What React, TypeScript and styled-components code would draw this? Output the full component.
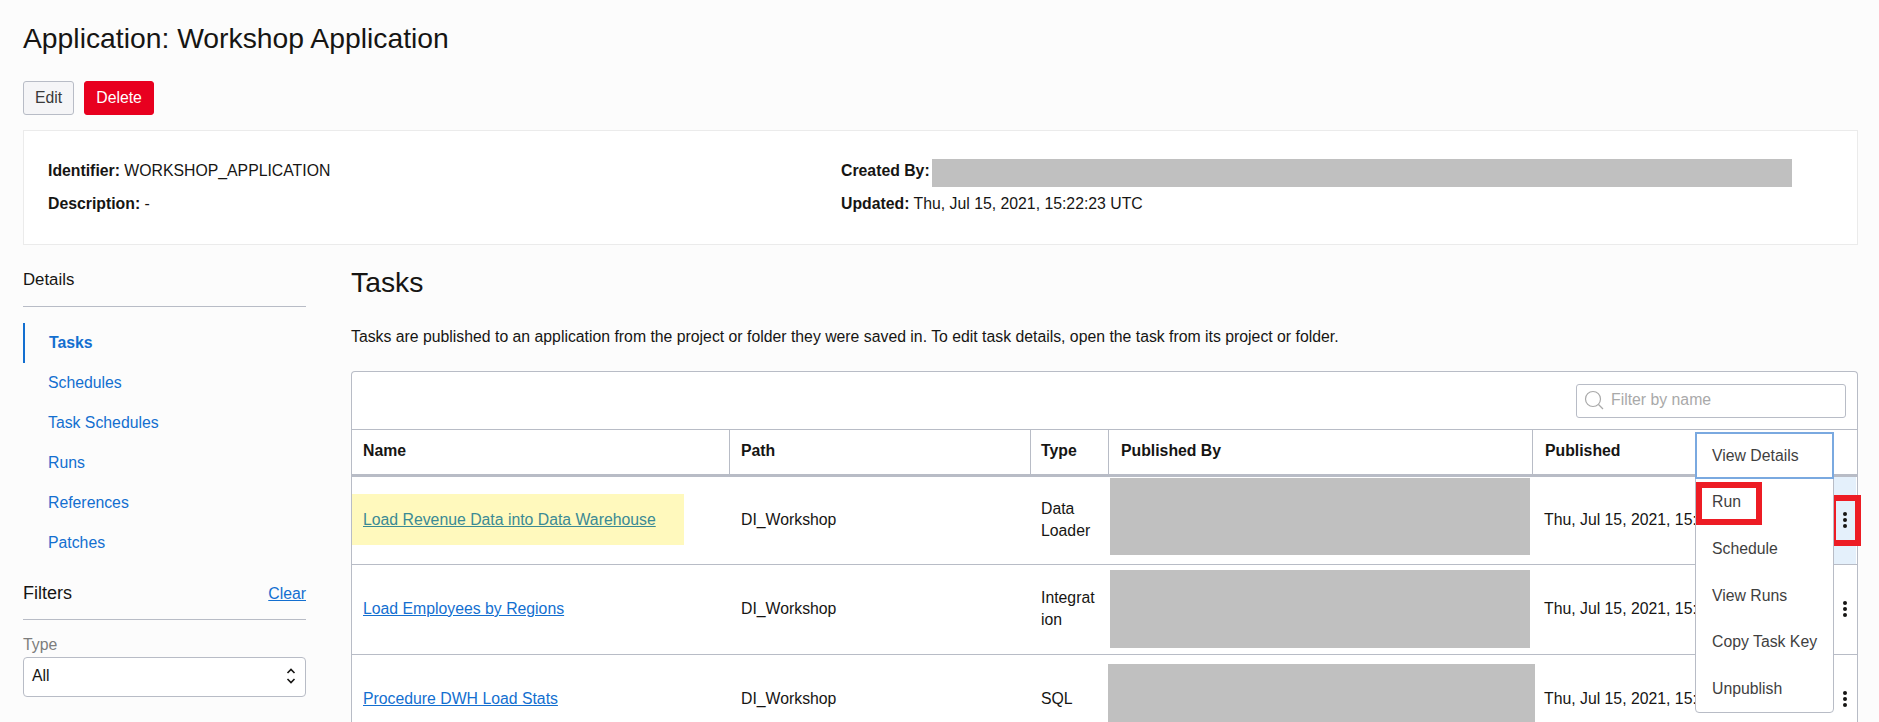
import styled, { createGlobalStyle } from 'styled-components';

const GlobalStyle = createGlobalStyle`
  html, body {
    margin: 0;
    padding: 0;
    background: #fcfcfc;
  }
  body {
    font-family: "Liberation Sans", Arial, sans-serif;
    font-size: 15.8px;
    color: #161513;
  }
  *, *::after {
    box-sizing: border-box;
  }
`;

const Page = styled.div`
  width: 1879px;
  height: 722px;
  padding: 22px 21px 0 23px;
  overflow: hidden;
`;

const Title = styled.h1`
  margin: 0;
  font-size: 28.3px;
  font-weight: 400;
  line-height: 32px;
`;

const ButtonRow = styled.div`
  display: flex;
  gap: 10px;
  margin-top: 27px;
`;

const Button = styled.button<{ $danger?: boolean }>`
  height: 34px;
  padding: 0 11px;
  border-radius: 3px;
  border: 1px solid ${(p) => (p.$danger ? '#e8001f' : '#b8bcc6')};
  background: ${(p) => (p.$danger ? '#e8001f' : '#f5f5f7')};
  color: ${(p) => (p.$danger ? '#ffffff' : '#3a3a3a')};
  font: inherit;
`;

const InfoPanel = styled.section`
  display: grid;
  grid-template-columns: 793px 1fr;
  height: 115px;
  margin-top: 15px;
  padding: 26px 24px 0;
  background: #ffffff;
  border: 1px solid #ebebeb;
`;

const InfoColumn = styled.div`
  display: flex;
  flex-direction: column;
  gap: 5px;
`;

const InfoRow = styled.div`
  display: flex;
  align-items: flex-start;
  height: 28px;
  line-height: 28px;
  white-space: pre;
`;

const InfoLabel = styled.b`
  font-weight: 700;
`;

const Redacted = styled.div<{ $w: number; $h: number; $top?: number; $left?: number }>`
  flex: none;
  width: ${(p) => p.$w}px;
  height: ${(p) => p.$h}px;
  margin-top: ${(p) => p.$top ?? 0}px;
  margin-left: ${(p) => p.$left ?? 0}px;
  background: #c0c0c0;
`;

const Body = styled.div`
  display: grid;
  grid-template-columns: 283px 1507px;
  column-gap: 45px;
  margin-top: 20px;
`;

const Sidebar = styled.aside`
  display: flex;
  flex-direction: column;
`;

const SideHeading = styled.div`
  padding-bottom: 11px;
  border-bottom: 1px solid #b8bcc6;
  font-size: 16.8px;
  line-height: 30px;
`;

const Nav = styled.nav`
  display: flex;
  flex-direction: column;
  margin-top: 16px;
`;

const NavItem = styled.a<{ $active?: boolean }>`
  height: 40px;
  padding-left: ${(p) => (p.$active ? '24px' : '23px')};
  border-left: 2px solid ${(p) => (p.$active ? '#136fd0' : 'transparent')};
  color: #136fd0;
  font-weight: ${(p) => (p.$active ? 700 : 400)};
  line-height: 39px;
`;

const FilterHead = styled.div`
  display: flex;
  justify-content: space-between;
  align-items: baseline;
  margin-top: 17px;
  padding-bottom: 13px;
  border-bottom: 1px solid #b8bcc6;
`;

const FilterTitle = styled.span`
  font-size: 18px;
  line-height: 26px;
`;

const TextLink = styled.a`
  color: #136fd0;
  text-decoration: underline;
`;

const FieldLabel = styled.div`
  margin-top: 15px;
  color: #7d7d7d;
  line-height: 20px;
`;

const SelectBox = styled.div`
  display: flex;
  align-items: center;
  justify-content: space-between;
  height: 40px;
  margin-top: 2px;
  padding: 0 9px 2px 8px;
  background: #ffffff;
  border: 1px solid #b8bcc6;
  border-radius: 4px;
`;

const Main = styled.main`
  display: flex;
  flex-direction: column;
`;

const SectionTitle = styled.h2`
  margin: 0;
  font-size: 28.3px;
  font-weight: 400;
  line-height: 34px;
`;

const Intro = styled.p`
  margin: 27px 0 0;
  line-height: 22px;
`;

const Card = styled.div`
  position: relative;
  margin-top: 23px;
  background: #ffffff;
  border: 1px solid #b8bcc6;
  border-bottom: none;
  border-radius: 4px 4px 0 0;
  height: 400px;
`;

const Toolbar = styled.div`
  display: flex;
  justify-content: flex-end;
  align-items: center;
  height: 58px;
  padding-right: 11px;
  border-bottom: 1px solid #b8bcc6;
`;

const SearchBox = styled.div`
  display: flex;
  align-items: center;
  gap: 7px;
  width: 270px;
  height: 34px;
  padding: 0 0 2px 7px;
  border: 1px solid #b8bcc6;
  border-radius: 3px;
  color: #a9a9a9;
`;

const columns = '378px 301px 78px 424px 301px 22px';

const HeaderRow = styled.div`
  display: grid;
  grid-template-columns: ${columns};
  height: 47px;
  border-bottom: 3px solid #b8bcc6;
`;

const HeaderCell = styled.div<{ $last?: boolean; $pad?: number }>`
  padding-left: ${(p) => p.$pad ?? 11}px;
  border-right: ${(p) => (p.$last ? 'none' : '1px solid #b8bcc6')};
  font-weight: 700;
  line-height: 41px;
`;

const Row = styled.div<{ $h: number }>`
  display: grid;
  grid-template-columns: ${columns};
  height: ${(p) => p.$h}px;
  border-bottom: 1px solid #b8bcc6;
`;

const Cell = styled.div`
  display: flex;
  align-items: center;
  padding: 0 0 2px 11px;
  min-width: 0;
  white-space: nowrap;
`;

const NameCell = styled(Cell)`
  padding-left: 0;
`;

const Marker = styled.div<{ $marked?: boolean }>`
  width: 332px;
  height: 51px;
  padding-left: 11px;
  line-height: 51px;
  background: ${(p) => (p.$marked ? '#fff9bd' : 'transparent')};

  a {
    color: ${(p) => (p.$marked ? '#3b8a94' : '#136fd0')};
  }
`;

const TypeCell = styled(Cell)`
  padding-left: 10px;
  padding-right: 13px;
  white-space: normal;
  line-height: 22px;
`;

const TypeText = styled.span<{ $keepWords?: boolean }>`
  word-break: ${(p) => (p.$keepWords ? 'normal' : 'break-all')};
`;

const ByCell = styled.div`
  display: flex;
  align-items: flex-start;
  min-width: 0;
`;

const ActionCell = styled.div<{ $selected?: boolean; $flagged?: boolean }>`
  position: relative;
  display: flex;
  align-items: center;
  justify-content: center;
  padding-bottom: 2px;
  background: ${(p) => (p.$selected ? '#e4f0fb' : 'transparent')};

  ${(p) =>
    p.$flagged &&
    `
    &::after {
      content: '';
      position: absolute;
      top: 18px;
      left: -4px;
      width: 31px;
      height: 51px;
      border: 6px solid #ed1c24;
    }
  `}
`;

const Menu = styled.div`
  position: absolute;
  top: 60px;
  left: 1343px;
  width: 139px;
  height: 281px;
  background: #ffffff;
  border: 1px solid #b8bcc6;
  border-radius: 0 0 4px 4px;
  z-index: 2;
`;

const MenuItem = styled.div<{ $focused?: boolean; $flagged?: boolean }>`
  position: relative;
  height: ${(p) => (p.$focused ? '47px' : '46.8px')};
  padding-left: 16px;
  color: #3f3f3f;
  line-height: 45px;
  ${(p) =>
    p.$focused &&
    `
    margin: -1px -1px 0;
    width: 139px;
    padding-left: 15px;
    border: 2px solid #7aa9e0;
    line-height: 43px;
  `}
  ${(p) =>
    p.$flagged &&
    `
    &::after {
      content: '';
      position: absolute;
      top: 3px;
      left: 0;
      width: 66px;
      height: 43px;
      border: 6px solid #ed1c24;
    }
  `}
`;

const Kebab = () => (
  <svg width="6" height="18" viewBox="0 0 6 18" fill="#161513">
    <circle cx="3" cy="3" r="2" />
    <circle cx="3" cy="9" r="2" />
    <circle cx="3" cy="15" r="2" />
  </svg>
);

const SearchIcon = () => (
  <svg width="20" height="20" viewBox="0 0 20 20" fill="none" stroke="#a9a9a9" strokeWidth="1.2">
    <circle cx="9" cy="9" r="7.5" />
    <path d="M14.5 14.5 L19 19" />
  </svg>
);

const UpDownIcon = () => (
  <svg width="10" height="18" viewBox="0 0 10 18" fill="none" stroke="#161513" strokeWidth="1.6">
    <path d="M1.5 6 L5 2.5 L8.5 6" />
    <path d="M1.5 12 L5 15.5 L8.5 12" />
  </svg>
);

const rows = [
  {
    name: 'Load Revenue Data into Data Warehouse',
    type: 'Data Loader',
    height: 88,
    redact: { w: 420, h: 77, top: 1, left: 1 },
    marked: true,
  },
  {
    name: 'Load Employees by Regions',
    type: 'Integration',
    height: 90,
    redact: { w: 420, h: 78, top: 5, left: 1 },
  },
  {
    name: 'Procedure DWH Load Stats',
    type: 'SQL',
    height: 90,
    redact: { w: 427, h: 78, top: 9, left: -1 },
  },
];

const navItems = ['Schedules', 'Task Schedules', 'Runs', 'References', 'Patches'];

export default function App() {
  return (
    <Page>
      <GlobalStyle />
      <Title>Application: Workshop Application</Title>
      <ButtonRow>
        <Button>Edit</Button>
        <Button $danger>Delete</Button>
      </ButtonRow>

      <InfoPanel>
        <InfoColumn>
          <InfoRow>
            <InfoLabel>Identifier:</InfoLabel> WORKSHOP_APPLICATION
          </InfoRow>
          <InfoRow>
            <InfoLabel>Description:</InfoLabel> -
          </InfoRow>
        </InfoColumn>
        <InfoColumn>
          <InfoRow>
            <InfoLabel>Created By:</InfoLabel>
            <Redacted $w={860} $h={28} $top={2} $left={2} />
          </InfoRow>
          <InfoRow>
            <InfoLabel>Updated:</InfoLabel> Thu, Jul 15, 2021, 15:22:23 UTC
          </InfoRow>
        </InfoColumn>
      </InfoPanel>

      <Body>
        <Sidebar>
          <SideHeading>Details</SideHeading>
          <Nav>
            <NavItem $active>Tasks</NavItem>
            {navItems.map((item) => (
              <NavItem key={item}>{item}</NavItem>
            ))}
          </Nav>
          <FilterHead>
            <FilterTitle>Filters</FilterTitle>
            <TextLink>Clear</TextLink>
          </FilterHead>
          <FieldLabel>Type</FieldLabel>
          <SelectBox>
            All
            <UpDownIcon />
          </SelectBox>
        </Sidebar>

        <Main>
          <SectionTitle>Tasks</SectionTitle>
          <Intro>
            Tasks are published to an application from the project or folder they were saved in. To edit task details,
            open the task from its project or folder.
          </Intro>
          <Card>
            <Toolbar>
              <SearchBox>
                <SearchIcon />
                Filter by name
              </SearchBox>
            </Toolbar>
            <HeaderRow>
              <HeaderCell>Name</HeaderCell>
              <HeaderCell>Path</HeaderCell>
              <HeaderCell $pad={10}>Type</HeaderCell>
              <HeaderCell $pad={12}>Published By</HeaderCell>
              <HeaderCell $last $pad={12}>
                Published
              </HeaderCell>
              <div />
            </HeaderRow>
            {rows.map((row) => (
              <Row key={row.name} $h={row.height}>
                <NameCell>
                  <Marker $marked={row.marked}>
                    <TextLink>{row.name}</TextLink>
                  </Marker>
                </NameCell>
                <Cell>DI_Workshop</Cell>
                <TypeCell>
                  <TypeText $keepWords={row.type !== 'Integration'}>{row.type}</TypeText>
                </TypeCell>
                <ByCell>
                  <Redacted $w={row.redact.w} $h={row.redact.h} $top={row.redact.top} $left={row.redact.left} />
                </ByCell>
                <Cell>Thu, Jul 15, 2021, 15:22:23 UTC</Cell>
                <ActionCell $selected={row.marked} $flagged={row.marked}>
                  <Kebab />
                </ActionCell>
              </Row>
            ))}
            <Menu>
              <MenuItem $focused>View Details</MenuItem>
              <MenuItem $flagged>Run</MenuItem>
              <MenuItem>Schedule</MenuItem>
              <MenuItem>View Runs</MenuItem>
              <MenuItem>Copy Task Key</MenuItem>
              <MenuItem>Unpublish</MenuItem>
            </Menu>
          </Card>
        </Main>
      </Body>
    </Page>
  );
}
